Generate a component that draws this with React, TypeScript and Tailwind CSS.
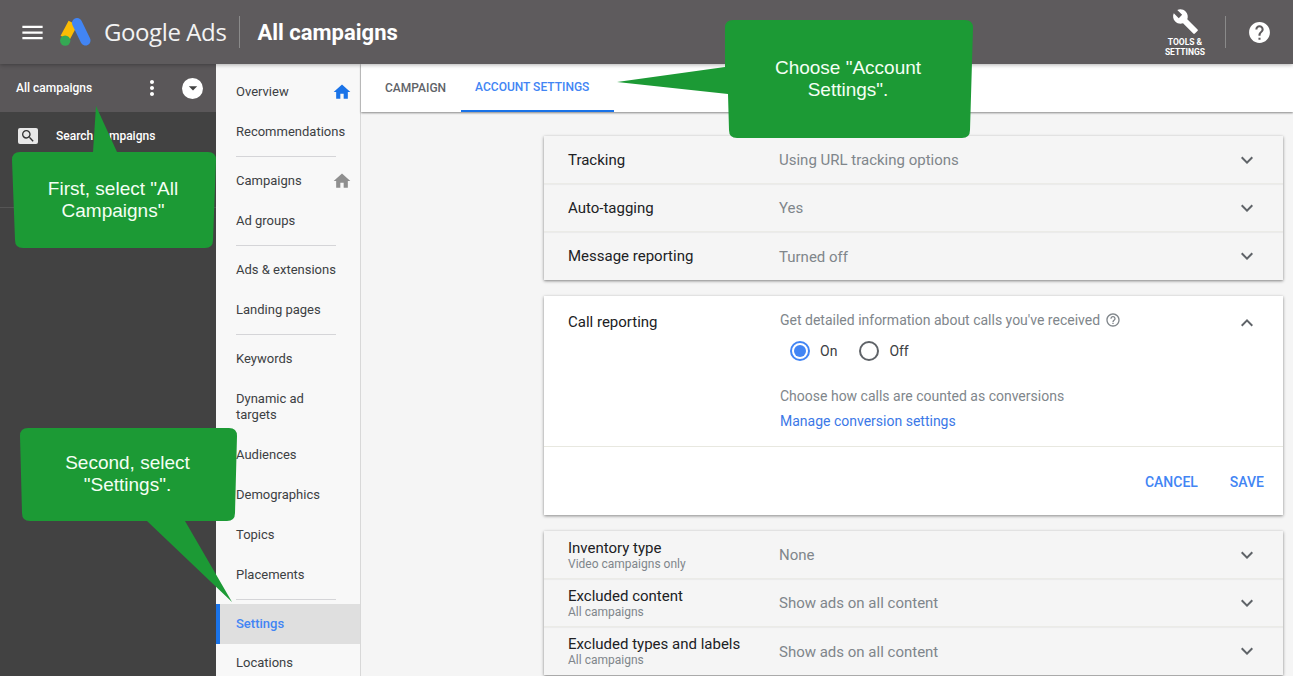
import { MdBuild, MdExpandLess, MdExpandMore, MdHelp, MdHelpOutline, MdHome, MdMenu, MdMoreVert, MdSearch, MdArrowDropDown } from "react-icons/md";

const navGroups = [
  ["Overview", "Recommendations"],
  ["Campaigns", "Ad groups"],
  ["Ads & extensions", "Landing pages"],
  ["Keywords", "Dynamic ad targets", "Audiences", "Demographics", "Topics", "Placements"],
  ["Settings", "Locations"],
];

const topRows = [
  { label: "Tracking", value: "Using URL tracking options" },
  { label: "Auto-tagging", value: "Yes" },
  { label: "Message reporting", value: "Turned off" },
];

const bottomRows = [
  { label: "Inventory type", sub: "Video campaigns only", value: "None" },
  { label: "Excluded content", sub: "All campaigns", value: "Show ads on all content" },
  { label: "Excluded types and labels", sub: "All campaigns", value: "Show ads on all content" },
];

function NavItem({ label }: { label: string }) {
  const active = label === "Settings";
  const tall = label === "Dynamic ad targets";
  return (
    <div
      className={[
        "flex items-center justify-between pl-5 pr-2 text-[13px] leading-4",
        tall ? "h-14" : label === "Locations" ? "h-[38px]" : "h-10",
        active ? "border-l-4 border-[#1a73e8] bg-[#dfdfdf] !pl-4 pb-[1px] font-medium text-[#4285f4]" : "text-[#3c4043]",
      ].join(" ")}
    >
      <span className={tall ? "w-24" : ""}>{label}</span>
      {label === "Overview" && <MdHome className="text-[20px] text-[#1a73e8]" />}
      {label === "Campaigns" && <MdHome className="text-[20px] text-[#8f8f8f]" />}
    </div>
  );
}

function Row({ label, sub, value }: { label: string; sub?: string; value: string }) {
  return (
    <div className="flex h-12 items-center border-b border-[#ebebe7] pl-6 pr-6 shadow-[0_1px_1px_rgba(0,0,0,0.04)] last:border-b-0">
      <div className="w-[211px] shrink-0">
        <div className={"text-[15px] leading-4 text-[#202124] " + (sub ? "mt-[1px]" : "")}>{label}</div>
        {sub && <div className="mt-[1px] text-[12px] leading-[14px] text-[#80868b]">{sub}</div>}
      </div>
      <div className="mt-[2px] flex-1 text-[15px] text-[#80868b]">{value}</div>
      <MdExpandMore className="text-[24px] text-[#5f6368]" />
    </div>
  );
}

function Callout({
  className,
  width,
  height,
  d,
  textClass,
  lines,
}: {
  className: string;
  width: number;
  height: number;
  d: string;
  textClass: string;
  lines: string[];
}) {
  return (
    <div className={"absolute z-30 " + className}>
      <svg width={width} height={height} className="absolute left-0 top-0 overflow-visible">
        <path d={d} fill="#1c9a35" />
      </svg>
      <div className={"absolute text-center font-['Liberation_Sans',sans-serif] text-[19px] leading-[22px] text-[#f4fff4] " + textClass}>
        {lines.map((line) => (
          <div key={line}>{line}</div>
        ))}
      </div>
    </div>
  );
}

export default function App() {
  return (
    <div className="relative flex h-screen flex-col overflow-hidden bg-[#f5f5f5] font-['Roboto',sans-serif]">
      <header className="z-20 flex h-16 shrink-0 items-center bg-[#5e5b5d] text-white shadow-[0_1px_4px_rgba(0,0,0,0.3)]">
        <MdMenu className="ml-[19px] text-[27px]" />
        <svg viewBox="0 0 31 28" className="ml-[14px] h-7 w-[31px]">
          <path d="M13 5 L5 20" stroke="#fbbc04" strokeWidth="10" strokeLinecap="butt" />
          <path d="M17 5 L25.5 22.5" stroke="#4285f4" strokeWidth="10" strokeLinecap="round" />
          <circle cx="5.2" cy="22.6" r="5.2" fill="#34a853" />
        </svg>
        <span className="ml-[13px] font-['Open_Sans',sans-serif] text-[24px] tracking-[-0.4px] text-[#f3f3f3]">Google Ads</span>
        <div className="ml-[13px] h-8 w-px bg-[#8a8a8a]" />
        <h1 className="ml-[17px] text-[22px] font-bold">All campaigns</h1>
        <div className="ml-auto flex w-[70px] flex-col items-center text-center text-[8.5px] font-bold leading-[10px]">
          <MdBuild className="mb-[2px] text-[27px]" />
          <span>TOOLS &</span>
          <span>SETTINGS</span>
        </div>
        <div className="ml-[5px] h-8 w-px bg-[#8a8a8a]" />
        <MdHelp className="ml-[21px] mr-[21px] text-[25px]" />
      </header>

      <div className="flex min-h-0 flex-1">
        <aside className="flex w-[216px] shrink-0 flex-col bg-[#424242] text-white">
          <div className="flex h-12 items-center bg-[#5a5759] pl-4 text-[12px] font-medium">
            <span className="w-[124px]">All campaigns</span>
            <MdMoreVert className="text-[24px]" />
            <div className="ml-[18px] flex h-[21px] w-[21px] items-center justify-center rounded-full bg-white">
              <MdArrowDropDown className="text-[20px] text-[#424242]" />
            </div>
          </div>
          <div className="flex h-24 items-start border-b border-[#555] pl-[18px] pt-4 text-[12px] font-medium">
            <div className="flex h-4 w-5 items-center justify-center rounded-[2px] bg-[#e8e8e8]">
              <MdSearch className="text-[16px] text-[#333]" />
            </div>
            <span className="ml-[18px] -mt-[1px]">Search campaigns</span>
          </div>
        </aside>

        <nav className="w-[145px] shrink-0 border-r border-[#d8d8d8] bg-[#f8f8f8] pt-2">
          {navGroups.map((group, i) => (
            <div key={group[0]}>
              {i > 0 && <div className="mb-1 ml-5 mr-6 mt-1 border-t border-[#d5d5d8]" />}
              {group.map((label) => (
                <NavItem key={label} label={label} />
              ))}
            </div>
          ))}
        </nav>

        <main className="min-w-0 flex-1">
          <div className="flex h-12 items-stretch bg-white pl-2 text-[12px] font-medium shadow-[0_1px_2px_rgba(0,0,0,0.45)]">
            <div className="flex items-center px-4 text-[#5f6368]">CAMPAIGN</div>
            <div className="ml-[-1px] flex w-[153px] items-center border-b-2 border-[#1a73e8] pl-[14px] text-[#4285f4]">
              ACCOUNT SETTINGS
            </div>
          </div>

          <div className="ml-[183px] mr-[10px] flex flex-col gap-4 pt-6">
            <section className="bg-[#f5f5f5] shadow-[0_1px_3px_rgba(0,0,0,0.45)]">
              {topRows.map((row) => (
                <Row key={row.label} {...row} />
              ))}
            </section>

            <section className="bg-white shadow-[0_1px_3px_rgba(0,0,0,0.45)]">
              <div className="flex h-[151px] border-b border-[#e8e8e0] pl-6 pr-6 pt-4">
                <div className="w-[212px] shrink-0 text-[15px] leading-5 text-[#202124]">Call reporting</div>
                <div className="flex-1 text-[14px] text-[#80868b]">
                  <div className="flex h-4 items-center gap-[5px]">
                    <span>Get detailed information about calls you've received</span>
                    <MdHelpOutline className="text-[16px]" />
                  </div>
                  <div className="ml-[10px] mt-3 flex h-[22px] items-center">
                    <div className="flex h-5 w-5 items-center justify-center rounded-full border-2 border-[#4285f4]">
                      <div className="h-3 w-3 rounded-full bg-[#4285f4]" />
                    </div>
                    <span className="ml-[10px] text-[#3c4043]">On</span>
                    <div className="ml-[22px] h-5 w-5 rounded-full border-2 border-[#5f6368]" />
                    <span className="ml-[10px] text-[#3c4043]">Off</span>
                  </div>
                  <div className="mt-6 leading-5">Choose how calls are counted as conversions</div>
                  <div className="mt-[5px] leading-5 text-[#3b78e7]">Manage conversion settings</div>
                </div>
                <MdExpandLess className="mt-[-1px] text-[24px] text-[#5f6368]" />
              </div>
              <div className="flex h-[68px] items-center justify-end gap-8 pr-[19px] pt-[2px] text-[14px] font-medium text-[#4285f4]">
                <span>CANCEL</span>
                <span>SAVE</span>
              </div>
            </section>

            <section className="bg-[#f5f5f5] shadow-[0_1px_3px_rgba(0,0,0,0.45)]">
              {bottomRows.map((row) => (
                <Row key={row.label} {...row} />
              ))}
            </section>
          </div>
        </main>
      </div>

      <Callout
        className="left-[12px] top-[106px]"
        width={204}
        height={142}
        d="M84 0 L105 46 L196 46 Q204 46 204 54 L201 134 Q201 142 193 142 L11 142 Q3 142 3 134 L0 54 Q0 46 8 46 L81 46 Z"
        textClass="left-0 top-[72px] w-[202px]"
        lines={['First, select "All', 'Campaigns"']}
      />
      <Callout
        className="left-[20px] top-[428px]"
        width={217}
        height={174}
        d="M8 0 L209 0 Q217 0 217 8 L215 85 Q215 93 207 93 L165 93 L212 174 L127 93 L10 93 Q2 93 2 85 L0 8 Q0 0 8 0 Z"
        textClass="left-0 top-[24px] w-[215px]"
        lines={["Second, select", '"Settings".']}
      />
      <Callout
        className="left-[617px] top-[20px]"
        width={356}
        height={118}
        d="M116 0 L348 0 Q356 0 356 8 L353 110 Q353 118 345 118 L120 118 Q112 118 112 110 L111 74 L0 62 L108 47 L108 8 Q108 0 116 0 Z"
        textClass="left-[108px] top-[37px] w-[246px]"
        lines={['Choose "Account', 'Settings".']}
      />
    </div>
  );
}
